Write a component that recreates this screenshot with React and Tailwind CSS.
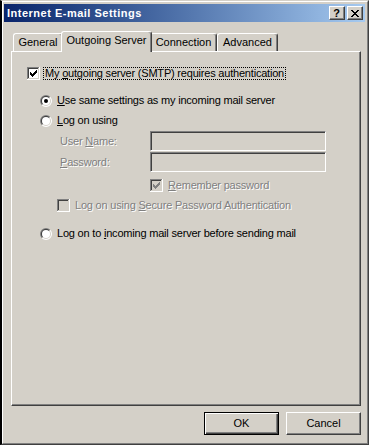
import React from 'react';

const CHECK_COLS = [
  [3, 5], [4, 6], [5, 7], [6, 6], [7, 5], [8, 4], [9, 3],
];

function CheckBox({ checked, disabled }) {
  const mark = disabled ? '#808080' : '#000000';
  return (
    <svg width="13" height="13" viewBox="0 0 13 13" shapeRendering="crispEdges" className="shrink-0">
      <rect x="0" y="0" width="13" height="13" fill="#ffffff" />
      <rect x="0" y="0" width="12" height="12" fill="#808080" />
      <rect x="1" y="1" width="11" height="11" fill="#d4d0c8" />
      <rect x="1" y="1" width="10" height="10" fill="#404040" />
      <rect x="2" y="2" width="9" height="9" fill={disabled ? '#d4d0c8' : '#ffffff'} />
      {checked &&
        CHECK_COLS.map(([x, y]) => (
          <rect key={x} x={x} y={y} width="1" height="3" fill={mark} />
        ))}
    </svg>
  );
}

function Radio({ checked }) {
  return (
    <svg width="12" height="12" viewBox="0 0 12 12" className="shrink-0">
      <path d="M1.757 10.243 A6 6 0 0 1 10.243 1.757 Z" fill="#808080" />
      <path d="M1.757 10.243 A6 6 0 0 0 10.243 1.757 Z" fill="#ffffff" />
      <path d="M2.464 9.536 A5 5 0 0 1 9.536 2.464 Z" fill="#404040" />
      <path d="M2.464 9.536 A5 5 0 0 0 9.536 2.464 Z" fill="#d4d0c8" />
      <circle cx="6" cy="6" r="4" fill="#ffffff" />
      {checked && <circle cx="6" cy="6" r="2" fill="#000000" />}
    </svg>
  );
}

function Tab({ label, width, selected }) {
  if (selected) {
    return (
      <div className={`${width} relative z-10 -mx-[2px] -mb-px h-[21px] bg-[#d4d0c8] border-t border-l border-white border-r border-r-[#404040] rounded-t-[3px] shadow-[inset_-1px_0_#808080] pt-[2px] text-center leading-[13px]`}>
        {label}
      </div>
    );
  }
  return (
    <div className={`${width} h-[18px] bg-[#d4d0c8] border-t border-l border-white border-r border-r-[#404040] rounded-t-[3px] shadow-[inset_-1px_0_#808080] pt-[2px] text-center leading-[13px]`}>
      {label}
    </div>
  );
}

function Field() {
  return (
    <div className="w-[176px] h-[20px] bg-[#d4d0c8] border border-t-[#808080] border-l-[#808080] border-b-white border-r-white shadow-[inset_1px_1px_#404040,inset_-1px_-1px_#d4d0c8]" />
  );
}

export default function App() {
  const dim = 'text-[#808080] [text-shadow:1px_1px_0_#ffffff]';
  return (
    <div className="w-[369px] h-[445px] bg-[#d4d0c8] border-l-2 border-l-black border-t border-t-[#d4d0c8] border-r border-r-[#404040] border-b border-b-[#404040] font-['Liberation_Sans',Arial,sans-serif] text-[11px] text-black select-none">
      <div className="h-full border-t border-l border-white border-r border-r-[#808080] border-b border-b-[#808080] pt-[2px] pl-px pr-[2px] flex flex-col">
        {/* title bar */}
        <div className="h-[18px] flex items-center pl-[3px] pr-[2px] bg-gradient-to-r from-[#0a246a] to-[#a6caf0]">
          <span className="flex-1 text-white font-bold tracking-[0.5px] leading-[18px]">Internet E-mail Settings</span>
          <div className="w-[16px] h-[14px] bg-[#d4d0c8] border border-t-white border-l-white border-b-[#404040] border-r-[#404040] shadow-[inset_-1px_-1px_#808080] flex items-center justify-center font-bold text-[11px] leading-none pr-px">
            ?
          </div>
          <div className="ml-[2px] w-[16px] h-[14px] bg-[#d4d0c8] border border-t-white border-l-white border-b-[#404040] border-r-[#404040] shadow-[inset_-1px_-1px_#808080] flex items-center justify-center">
            <svg width="8" height="7" viewBox="0 0 8 7" shapeRendering="crispEdges">
              <path d="M0 0h2v1h-2zM6 0h2v1h-2zM1 1h2v1h-2zM5 1h2v1h-2zM2 2h4v1h-4zM3 3h2v1h-2zM2 4h4v1h-4zM1 5h2v1h-2zM5 5h2v1h-2zM0 6h2v1h-2zM6 6h2v1h-2z" fill="#000" />
            </svg>
          </div>
        </div>

        {/* tabs */}
        <div className="mt-[9px] ml-[9px] flex items-end">
          <Tab label="General" width="w-[50px]" />
          <Tab label="Outgoing Server" width="w-[91px]" selected />
          <Tab label="Connection" width="w-[67px]" />
          <Tab label="Advanced" width="w-[61px]" />
        </div>

        {/* tab page */}
        <div className="ml-[7px] w-[350px] h-[355px] border-t border-l border-white border-r border-r-[#404040] border-b border-b-[#404040] shadow-[inset_-1px_-1px_#808080] flex flex-col tracking-[-0.2px]">
          <div className="mt-[15px] h-[13px] pl-[15px] flex items-center">
            <CheckBox checked />
            <span className="ml-[3px] h-[13px] border border-dotted border-black px-px leading-[11px]">
              My <u>o</u>utgoing server (SMTP) requires authentication
            </span>
          </div>

          <div className="mt-[14px] h-[13px] pl-[28px] flex items-center gap-[5px] leading-[13px]">
            <Radio checked />
            <span><u>U</u>se same settings as my incoming mail server</span>
          </div>

          <div className="mt-[7px] h-[13px] pl-[28px] flex items-center gap-[5px] leading-[13px]">
            <Radio />
            <span><u>L</u>og on using</span>
          </div>

          <div className="mt-[4px] h-[20px] pl-[48px] flex items-center">
            <span className={`w-[90px] ${dim}`}>User <u>N</u>ame:</span>
            <Field />
          </div>

          <div className="mt-px h-[20px] pl-[48px] flex items-center">
            <span className={`w-[90px] ${dim}`}><u>P</u>assword:</span>
            <Field />
          </div>

          <div className="mt-[7px] h-[13px] pl-[138px] flex items-center gap-[5px] leading-[13px]">
            <CheckBox checked disabled />
            <span className={dim}><u>R</u>emember password</span>
          </div>

          <div className="mt-[7px] h-[13px] pl-[45px] flex items-center gap-[5px] leading-[13px]">
            <CheckBox disabled />
            <span className={dim}>Log on using <u>S</u>ecure Password Authentication</span>
          </div>

          <div className="mt-[15px] h-[13px] pl-[28px] flex items-center gap-[5px] leading-[13px]">
            <Radio />
            <span>Log on to <u>i</u>ncoming mail server before sending mail</span>
          </div>
        </div>

        {/* buttons */}
        <div className="mt-[6px] pr-[4px] flex justify-end gap-[7px]">
          <button className="w-[75px] h-[23px] bg-[#d4d0c8] border border-black shadow-[inset_1px_1px_#ffffff,inset_-1px_-1px_#404040,inset_-2px_-2px_#808080] leading-none">
            OK
          </button>
          <button className="w-[75px] h-[23px] bg-[#d4d0c8] border border-t-white border-l-white border-b-[#404040] border-r-[#404040] shadow-[inset_-1px_-1px_#808080] leading-none">
            Cancel
          </button>
        </div>
      </div>
    </div>
  );
}
